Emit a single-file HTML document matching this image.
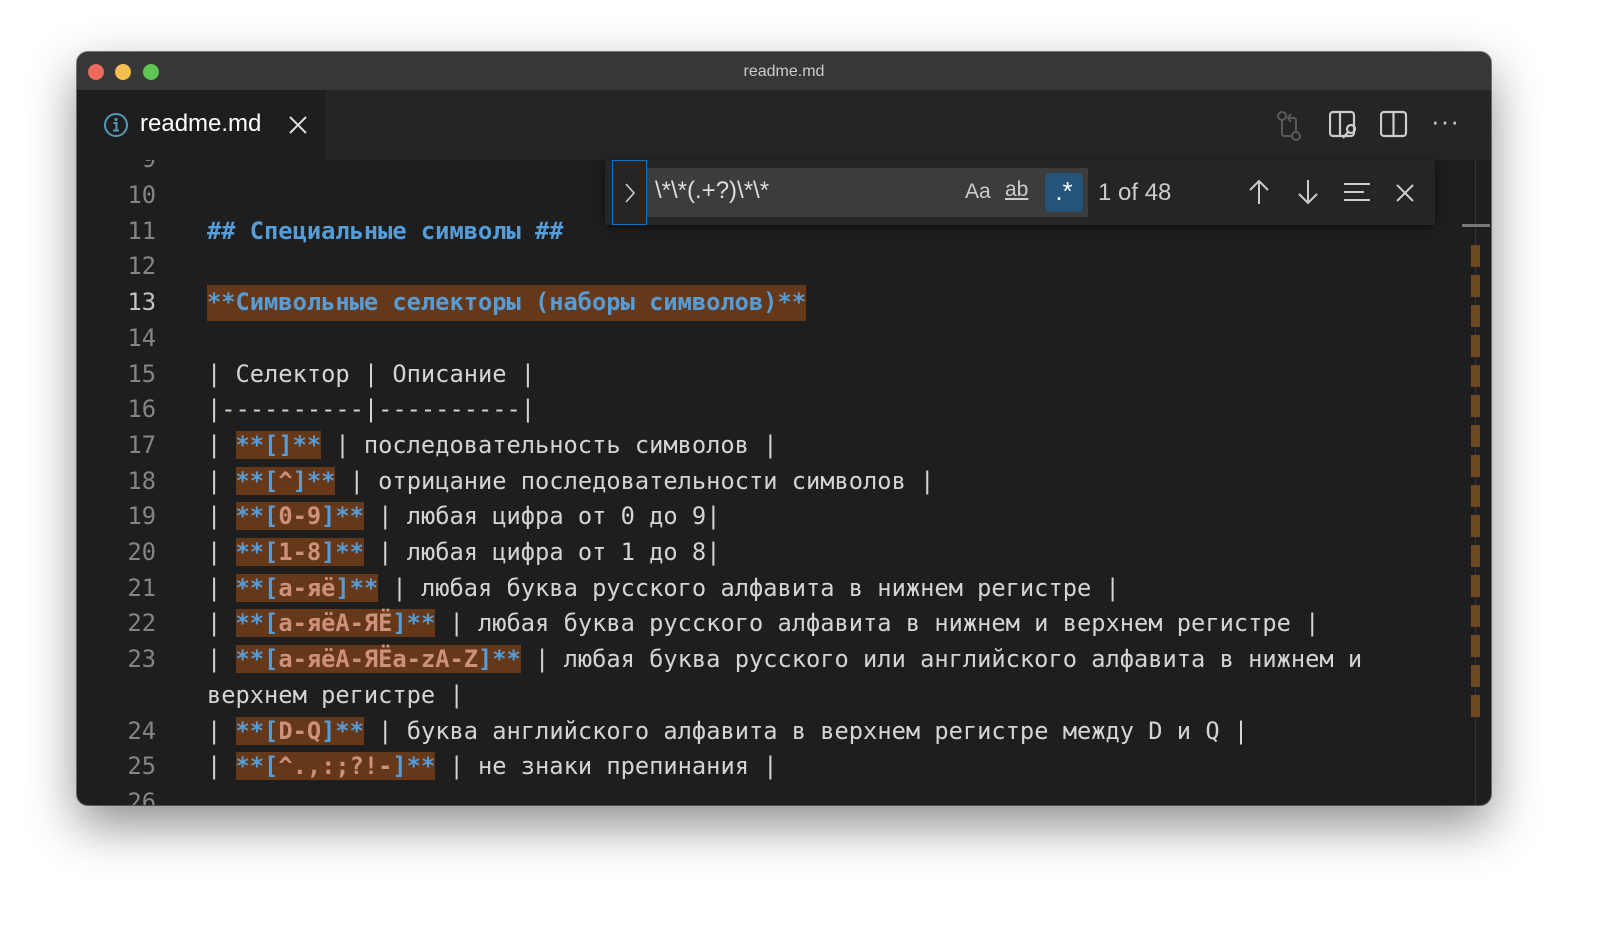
<!DOCTYPE html>
<html><head><meta charset="utf-8"><style>
*{margin:0;padding:0;box-sizing:border-box}
body{width:1600px;height:927px;background:#fff;position:relative;overflow:hidden;font-family:"Liberation Sans",sans-serif}
.win{position:absolute;left:77px;top:52px;width:1414px;height:753px;border-radius:11px;overflow:hidden;background:#1e1e1e;box-shadow:0 20px 50px rgba(0,0,0,.45),0 0 0 1px rgba(0,0,0,.5)}
.title{position:absolute;left:0;top:0;width:100%;height:38px;background:#373737;color:#ccc;font-size:16px;text-align:center;line-height:40px}
.dot{position:absolute;top:12px;width:16px;height:16px;border-radius:50%}
.tabs{position:absolute;left:0;top:38px;width:100%;height:70px;background:#252526}
.tab{position:absolute;left:0;top:0;width:248px;height:70px;background:#1e1e1e}
.ed{position:absolute;left:0;top:108px;width:100%;height:645px;overflow:hidden;font-family:"DejaVu Sans Mono","Liberation Mono",monospace;font-size:23.7px}
.ln{position:absolute;left:0;width:79px;text-align:right;color:#858585;height:35.7px;line-height:35.7px}
.tx{position:absolute;left:130px;height:35.7px;line-height:35.7px;color:#d4d4d4;white-space:pre}
.b{color:#569cd6;font-weight:bold}
.o{color:#ce9178;font-weight:bold}
.h{background:#653819}
.find{position:absolute;left:528px;top:108px;width:830px;height:65px;background:#252526;box-shadow:0 2px 8px rgba(0,0,0,.6)}
</style></head><body>
<div class="win">
 <div class="title">readme.md
  <div class="dot" style="left:11px;background:#ed6a5e"></div>
  <div class="dot" style="left:38px;background:#f5bf4f"></div>
  <div class="dot" style="left:66px;background:#61c554"></div>
 </div>
 <div class="tabs">
  <div class="tab">
   <svg style="position:absolute;left:26px;top:22px" width="26" height="26" viewBox="0 0 26 26"><circle cx="13" cy="13" r="11" fill="none" stroke="#519aba" stroke-width="2"/><circle cx="13" cy="7.5" r="1.6" fill="#519aba"/><path d="M10.5 11h3v7M10 18.5h6" stroke="#519aba" stroke-width="2" fill="none"/></svg>
   <div style="position:absolute;left:63px;top:20px;color:#fff;font-size:24px">readme.md</div>
   <svg style="position:absolute;left:212px;top:26px" width="18" height="18"><path d="M1 1L17 17M17 1L1 17" stroke="#ddd" stroke-width="2"/></svg>
  </div>
  <svg style="position:absolute;left:1198px;top:20px" width="30" height="32" viewBox="0 0 30 32" fill="none" stroke="#5a5a5a" stroke-width="2"><circle cx="7" cy="6" r="4"/><circle cx="21" cy="26" r="4"/><path d="M7 10v14a2 2 0 0 0 2 2h8M21 22V10a2 2 0 0 0-2-2h-6M16 4l-3 4 3 4"/></svg>
  <svg style="position:absolute;left:1252px;top:20px" width="30" height="30" viewBox="0 0 30 30" fill="none" stroke="#ccc" stroke-width="2.2"><rect x="1" y="2" width="24" height="24" rx="3"/><path d="M11 2v24"/><circle cx="22" cy="19" r="4"/><path d="M19 22l-5 6"/></svg>
  <svg style="position:absolute;left:1303px;top:20px" width="28" height="28" viewBox="0 0 28 28" fill="none" stroke="#ccc" stroke-width="2.2"><rect x="1" y="2" width="25" height="24" rx="3"/><path d="M13.5 2v24"/></svg>
  <div style="position:absolute;left:1354px;top:16px;color:#ccc;font-size:26px;letter-spacing:1px">···</div>
 </div>
 <div class="ed">
  <div class="ln" style="top:-17.7px">9</div>
  <div class="ln" style="top:18px">10</div>
  <div class="ln" style="top:53.7px">11</div>
  <div class="tx b" style="top:53.7px">## Специальные символы ##</div>
  <div class="ln" style="top:89.4px">12</div>
  <div class="ln" style="top:125.1px;color:#c6c6c6">13</div>
  <div class="tx b h" style="top:125.1px">**Символьные селекторы (наборы символов)**</div>
  <div class="ln" style="top:160.8px">14</div>
  <div class="ln" style="top:196.5px">15</div>
  <div class="tx" style="top:196.5px">| Селектор | Описание |</div>
  <div class="ln" style="top:232.2px">16</div>
  <div class="tx" style="top:232.2px">|----------|----------|</div>
  <div class="ln" style="top:267.9px">17</div>
  <div class="tx" style="top:267.9px">| <span class="b h">**[]**</span> | последовательность символов |</div>
  <div class="ln" style="top:303.6px">18</div>
  <div class="tx" style="top:303.6px">| <span class="b h">**[<span class="o">^</span>]**</span> | отрицание последовательности символов |</div>
  <div class="ln" style="top:339.3px">19</div>
  <div class="tx" style="top:339.3px">| <span class="b h">**[<span class="o">0-9</span>]**</span> | любая цифра от 0 до 9|</div>
  <div class="ln" style="top:375px">20</div>
  <div class="tx" style="top:375px">| <span class="b h">**[<span class="o">1-8</span>]**</span> | любая цифра от 1 до 8|</div>
  <div class="ln" style="top:410.7px">21</div>
  <div class="tx" style="top:410.7px">| <span class="b h">**[<span class="o">a-яё</span>]**</span> | любая буква русского алфавита в нижнем регистре |</div>
  <div class="ln" style="top:446.4px">22</div>
  <div class="tx" style="top:446.4px">| <span class="b h">**[<span class="o">a-яёА-ЯЁ</span>]**</span> | любая буква русского алфавита в нижнем и верхнем регистре |</div>
  <div class="ln" style="top:482.1px">23</div>
  <div class="tx" style="top:482.1px">| <span class="b h">**[<span class="o">a-яёА-ЯЁa-zA-Z</span>]**</span> | любая буква русского или английского алфавита в нижнем и</div>
  <div class="tx" style="top:517.8px">верхнем регистре |</div>
  <div class="ln" style="top:553.5px">24</div>
  <div class="tx" style="top:553.5px">| <span class="b h">**[<span class="o">D-Q</span>]**</span> | буква английского алфавита в верхнем регистре между D и Q |</div>
  <div class="ln" style="top:589.2px">25</div>
  <div class="tx" style="top:589.2px">| <span class="b h">**[<span class="o">^.,:;?!-</span>]**</span> | не знаки препинания |</div>
  <div class="ln" style="top:624.9px">26</div>
  <div style="position:absolute;left:1398px;top:0;width:1px;height:645px;background:#333"></div>
  <div style="position:absolute;left:1385px;top:64px;width:28px;height:3px;background:#777"></div>
  <div style="position:absolute;left:1394px;top:85px;width:9px;height:480px;background:repeating-linear-gradient(#7a5020 0 22px,transparent 22px 30px);opacity:.85"></div>
 </div>
 <div class="find">
  <div style="position:absolute;left:7px;top:0;width:35px;height:65px;border:1px solid #0e72c8"></div>
  <svg style="position:absolute;left:18px;top:22px" width="14" height="22"><path d="M3 2l8 9-8 9" stroke="#ccc" stroke-width="1.6" fill="none"/></svg>
  <div style="position:absolute;left:42px;top:8px;width:441px;height:49px;background:#3c3c3c"></div>
  <div style="position:absolute;left:50px;top:17px;color:#ddd;font-size:24px">\*\*(.+?)\*\*</div>
  <div style="position:absolute;left:360px;top:20px;color:#ccc;font-size:21px">Aa</div>
  <div style="position:absolute;left:400px;top:18px;color:#ccc;font-size:21px;text-decoration:underline">ab</div>
  <div style="position:absolute;left:440px;top:13px;width:38px;height:39px;background:#245479;border-radius:4px;color:#fff;font-size:26px;text-align:center;line-height:36px">.*</div>
  <div style="position:absolute;left:493px;top:19px;color:#ccc;font-size:24px">1 of 48</div>
  <svg style="position:absolute;left:642px;top:18px" width="24" height="28" fill="none" stroke="#ccc" stroke-width="2"><path d="M12 26V3M3 12l9-9 9 9"/></svg>
  <svg style="position:absolute;left:691px;top:18px" width="24" height="28" fill="none" stroke="#ccc" stroke-width="2"><path d="M12 2v23M3 16l9 9 9-9"/></svg>
  <svg style="position:absolute;left:738px;top:22px" width="28" height="22" fill="none" stroke="#ccc" stroke-width="2"><path d="M1 2h26M1 10h20M1 18h26"/></svg>
  <svg style="position:absolute;left:790px;top:23px" width="20" height="20" fill="none" stroke="#ccc" stroke-width="2"><path d="M2 2l16 16M18 2L2 18"/></svg>
 </div>
</div>
</body></html>
